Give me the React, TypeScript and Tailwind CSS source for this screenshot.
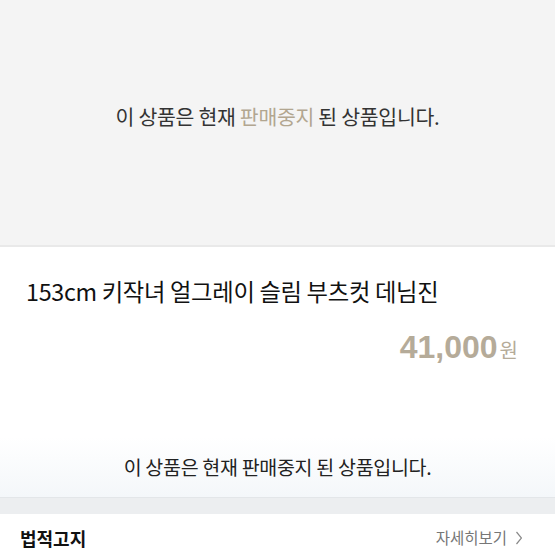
import React from 'react';

const font = { fontFamily: '"Noto Sans CJK KR", "Liberation Sans", sans-serif' };

const App: React.FC = () => {
  return (
    <div className="w-[555px] h-[555px] overflow-hidden bg-white" style={font}>
      {/* Sold-out banner */}
      <div className="h-[247px] bg-[#f4f4f4] border-b-2 border-[#e9e9e9] flex items-center justify-center pb-[12px]">
        <p className="text-[20.5px] text-[#333333] tracking-[-0.3px]">
          이 상품은 현재 <span className="text-[#b2a690]">판매중지</span> 된 상품입니다.
        </p>
      </div>

      {/* Product info */}
      <div className="h-[190px] px-[26px] pt-[26px]">
        <h1 className="text-[23.3px] text-[#111111] leading-[36px] tracking-[-0.3px]">
          153cm 키작녀 얼그레이 슬림 부츠컷 데님진
        </h1>
        <div className="flex justify-end items-baseline mt-[22px] pr-[11px]">
          <span className="text-[32px] font-bold text-[#b5ab99] leading-none" style={{ fontFamily: '"Liberation Sans", sans-serif' }}>41,000</span>
          <span className="text-[20px] text-[#b5ab99] leading-none ml-[2px]">원</span>
        </div>
      </div>

      {/* Notice */}
      <div className="h-[61px] bg-gradient-to-b from-white to-[#f4f7fa] border-b border-[#e3e6e9] flex items-center justify-center">
        <p className="text-[19.5px] text-[#222222] tracking-[-0.3px]">이 상품은 현재 판매중지 된 상품입니다.</p>
      </div>
      <div className="h-[16px] bg-[#eceef0]" />

      {/* Legal */}
      <div className="flex items-center justify-between px-[20px] h-[48px]">
        <span className="text-[18px] font-bold text-[#111111]">법적고지</span>
        <span className="flex items-center text-[15.5px] text-[#777777] gap-[9px] pr-[13px]">
          자세히보기
          <svg width="6" height="14" viewBox="0 0 6 14" fill="none">
            <path d="M0.5 1l5 6-5 6" stroke="#888888" strokeWidth="1.2" />
          </svg>
        </span>
      </div>
    </div>
  );
};

export default App;
